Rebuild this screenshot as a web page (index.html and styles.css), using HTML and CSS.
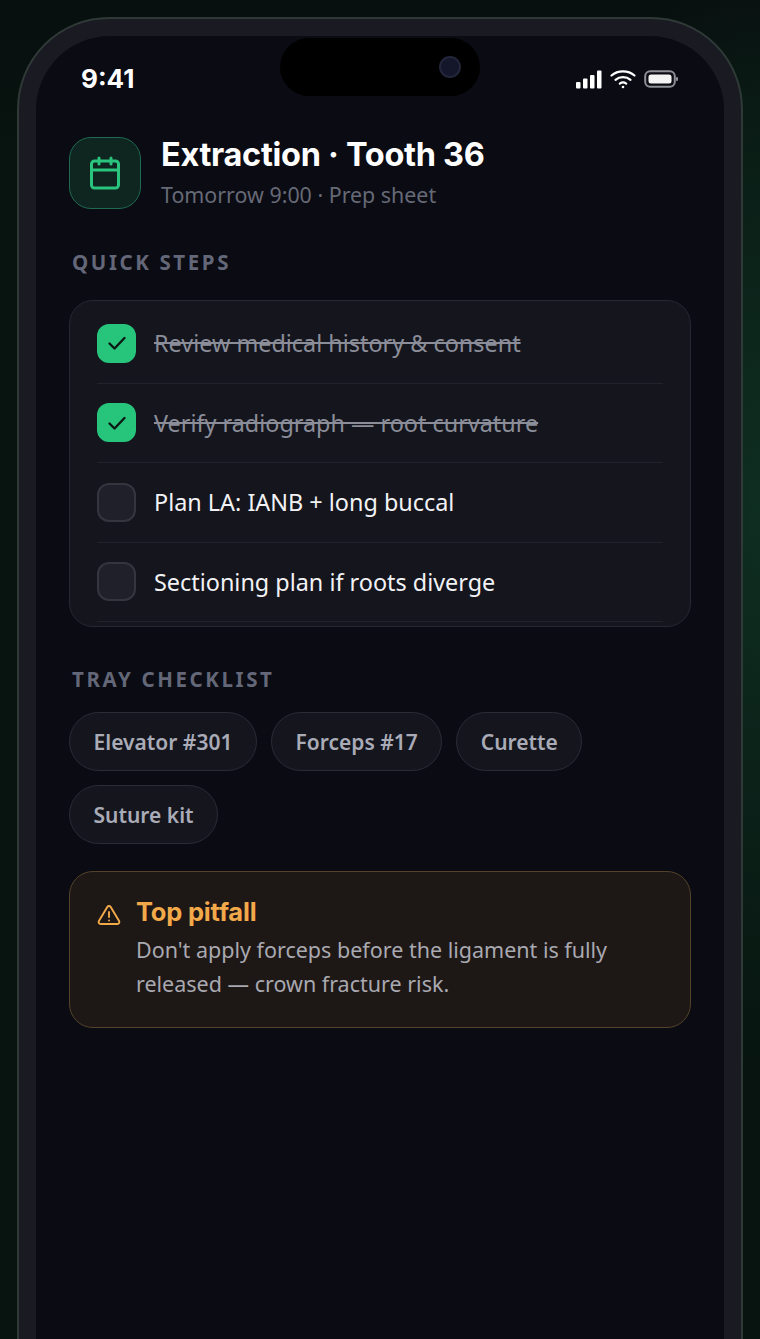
FILE: index.html
```html
<!DOCTYPE html>
<html lang="en">
<head>
    <meta charset="UTF-8">
    <meta name="viewport" content="width=device-width, initial-scale=1.0">
    <title>Extraction Prep Sheet</title>
    <link rel="stylesheet" href="styles.css">
</head>
<body>
    <div class="phone">
        <div class="screen">
            <div class="island"><span class="camera"></span></div>
            <div class="status-bar">
                <span class="time">9:41</span>
                <div class="status-icons">
                    <svg width="26" height="19" viewBox="0 0 26 19" fill="#fff">
                        <rect x="0" y="12" width="4.500" height="6.500" rx="1"/>
                        <rect x="7" y="8.500" width="4.500" height="10" rx="1"/>
                        <rect x="14" y="5" width="4.500" height="13.500" rx="1"/>
                        <rect x="21" y="0.500" width="4.500" height="18" rx="1"/>
                    </svg>
                    <svg width="26" height="20" viewBox="0 0 26 20" fill="none" stroke="#fff" stroke-width="2.200" stroke-linecap="round">
                        <path d="M1.500 6.500C7.800 1 18.200 1 24.500 6.500"/>
                        <path d="M5.500 10.800C9.500 7.300 16.500 7.300 20.500 10.800"/>
                        <path d="M9.800 14.600C11.600 13.300 14.400 13.300 16.200 14.600"/>
                        <circle cx="13" cy="18" r="1.300" fill="#fff" stroke="none"/>
                    </svg>
                    <svg width="34" height="18" viewBox="0 0 34 18" fill="none">
                        <rect x="1.200" y="1.200" width="29.600" height="15.600" rx="5" stroke="#8f8f97" stroke-width="2"/>
                        <rect x="4.500" y="4.500" width="23" height="9" rx="2.500" fill="#f4f4f4"/>
                        <rect x="32" y="7" width="2" height="4" rx="1" fill="#8f8f97"/>
                    </svg>
                </div>
            </div>

            <div class="content">
                <div class="header">
                    <div class="header-icon">
                        <svg width="36" height="36" viewBox="0 0 24 24" fill="none" stroke="#2bc47f" stroke-width="2" stroke-linecap="round" stroke-linejoin="round">
                            <path d="M8 2v4"/>
                            <path d="M16 2v4"/>
                            <rect x="3" y="4" width="18" height="18" rx="2"/>
                            <path d="M3 10h18"/>
                        </svg>
                    </div>
                    <div>
                        <h1>Extraction · Tooth 36</h1>
                        <p class="subtitle">Tomorrow 9:00 · Prep sheet</p>
                    </div>
                </div>

                <h2 class="section-title">QUICK STEPS</h2>
                <div class="steps">
                    <div class="step done">
                        <span class="check">
                            <svg width="20" height="20" viewBox="0 0 20 20" fill="none" stroke="#0b1a14" stroke-width="2.400" stroke-linecap="round" stroke-linejoin="round"><path d="M2.500 10.500l5 5 10-10.500"/></svg>
                        </span>
                        <span>Review medical history &amp; consent</span>
                    </div>
                    <div class="step done">
                        <span class="check">
                            <svg width="20" height="20" viewBox="0 0 20 20" fill="none" stroke="#0b1a14" stroke-width="2.400" stroke-linecap="round" stroke-linejoin="round"><path d="M2.500 10.500l5 5 10-10.500"/></svg>
                        </span>
                        <span>Verify radiograph — root curvature</span>
                    </div>
                    <div class="step">
                        <span class="check"></span>
                        <span>Plan LA: IANB + long buccal</span>
                    </div>
                    <div class="step">
                        <span class="check"></span>
                        <span>Sectioning plan if roots diverge</span>
                    </div>
                </div>

                <h2 class="section-title tray-title">TRAY CHECKLIST</h2>
                <div class="chips">
                    <span class="chip">Elevator #301</span>
                    <span class="chip">Forceps #17</span>
                    <span class="chip">Curette</span>
                    <span class="chip">Suture kit</span>
                </div>

                <div class="pitfall">
                    <svg class="pitfall-icon" width="24" height="24" viewBox="0 0 24 24" fill="none" stroke="#f2a94a" stroke-width="1.900" stroke-linecap="round" stroke-linejoin="round">
                        <path d="M10.300 3.900L1.900 18a2 2 0 0 0 1.700 3h16.800a2 2 0 0 0 1.700-3L13.700 3.900a2 2 0 0 0-3.400 0z"/>
                        <path d="M12 9v5"/>
                        <path d="M12 17.500h.01"/>
                    </svg>
                    <div>
                        <h3>Top pitfall</h3>
                        <p>Don't apply forceps before the ligament is fully released — crown fracture risk.</p>
                    </div>
                </div>
            </div>
        </div>
    </div>
</body>
</html>
```

FILE: styles.css
```css
* {
    margin: 0;
    padding: 0;
    box-sizing: border-box;
}
html, body {
    height: 100%;
    overflow: hidden;
}
body {
    background: radial-gradient(ellipse 200px 560px at 100% 38%, #0f2e22 0%, rgba(15,46,34,0) 100%), linear-gradient(#080f0f 0, #07140f 160px), #07140f;
    font-family: "Noto Sans", "Open Sans", sans-serif;
    color: #fff;
    padding: 17px 17px 0;
}
.phone {
    height: 1500px;
    background: #1a1b22;
    border: 2px solid #2f3a37;
    border-radius: 92px;
    padding: 17px;
}
.screen {
    position: relative;
    height: 100%;
    background: #0a0b13;
    border-radius: 74px;
}
.island {
    position: absolute;
    top: 2px;
    left: 244px;
    width: 200px;
    height: 58px;
    background: #000;
    border-radius: 29px;
}
.camera {
    position: absolute;
    top: 18px;
    right: 19px;
    width: 22px;
    height: 22px;
    background: #14172a;
    border: 2px solid #23263a;
    border-radius: 50%;
}
.status-bar {
    display: flex;
    justify-content: space-between;
    align-items: center;
    height: 84px;
    padding: 0 46px 0 45px;
}
.time {
    font-family: "Inter", sans-serif;
    font-size: 26px;
    font-weight: 700;
}
.status-icons {
    display: flex;
    align-items: center;
    gap: 8px;
    margin-top: 2px;
}
.content {
    padding: 16px 33px 0;
}
.header {
    display: flex;
    gap: 20px;
    margin-bottom: 37px;
}
.header-icon {
    display: flex;
    align-items: center;
    justify-content: center;
    width: 72px;
    height: 72px;
    margin-top: 1px;
    background: #0f2520;
    border: 1.5px solid #1f6a50;
    border-radius: 22px;
}
h1 {
    font-family: "Inter", sans-serif;
    font-size: 32.5px;
    font-weight: 700;
    line-height: 38px;
    letter-spacing: -0.3px;
}
.subtitle {
    margin-top: 5px;
    font-size: 21.4px;
    line-height: 32px;
    color: #666976;
}
.section-title {
    margin-left: 3px;
    font-size: 20.5px;
    font-weight: 700;
    line-height: 28px;
    letter-spacing: 2.6px;
    color: #636778;
}
.steps {
    margin-top: 24px;
    padding: 3px 27px 4px;
    background: #14151d;
    border: 1.5px solid #262832;
    border-radius: 24px;
}
.step {
    display: flex;
    align-items: center;
    gap: 18px;
    height: 79.5px;
    font-size: 23.4px;
    color: #f2f2f5;
    border-bottom: 1px solid #21222b;
}
.step.done span:last-child {
    color: #8b8d99;
    text-decoration: line-through;
}
.check {
    display: flex;
    align-items: center;
    justify-content: center;
    flex-shrink: 0;
    width: 39px;
    height: 39px;
    background: #1f2029;
    border: 2px solid #33353f;
    border-radius: 12px;
}
.done .check {
    background: #27c47c;
    border-color: #27c47c;
}
.tray-title {
    margin-top: 38px;
}
.chips {
    display: flex;
    flex-wrap: wrap;
    gap: 14px;
    margin-top: 19px;
}
.chip {
    display: flex;
    align-items: center;
    height: 59px;
    padding: 0 23.5px;
    font-size: 21px;
    font-weight: 600;
    color: #a9abb7;
    background: #14151d;
    border: 1.5px solid #2a2c36;
    border-radius: 30px;
}
.pitfall {
    display: flex;
    gap: 15px;
    margin-top: 27px;
    padding: 24px 28px 26px;
    background: #1d1716;
    border: 1.5px solid #54422a;
    border-radius: 24px;
}
.pitfall-icon {
    flex-shrink: 0;
    margin-top: 7px;
    margin-left: -1px;
}
.pitfall h3 {
    margin-bottom: 5px;
    font-family: "Inter", sans-serif;
    font-size: 25.5px;
    font-weight: 700;
    line-height: 32px;
    letter-spacing: -0.2px;
    color: #f2a94a;
}
.pitfall p {
    font-size: 21.5px;
    line-height: 34px;
    color: #a9a9b0;
}
```
